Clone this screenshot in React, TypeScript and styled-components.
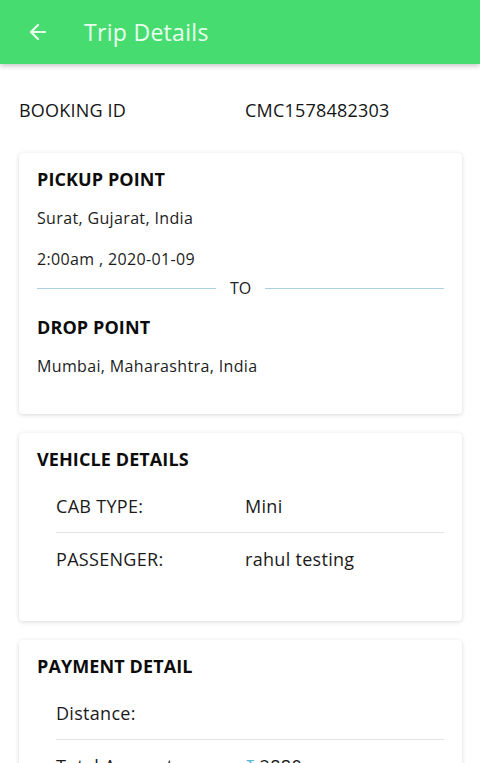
import React from "react";
import styled, { createGlobalStyle } from "styled-components";
import { ArrowLeft } from "lucide-react";

const GlobalStyle = createGlobalStyle`
  body {
    margin: 0;
    background: #ffffff;
    font-family: "Open Sans", "Noto Sans", sans-serif;
    color: #1a1a1a;
  }
`;

const Header = styled.header`
  height: 64px;
  background: #46dc6f;
  display: flex;
  align-items: center;
  padding: 0 26px;
  box-shadow: 0 2px 5px rgba(0, 0, 0, 0.22);
  color: #eafff0;
`;

const Title = styled.h1`
  margin: 0 0 0 34px;
  font-size: 23px;
  font-weight: 400;
  letter-spacing: 0.3px;
`;

const BookingRow = styled.div`
  display: grid;
  grid-template-columns: 226px 1fr;
  padding: 0 19px;
  margin-top: 34px;
  font-size: 18px;
  line-height: 24px;
  color: #151515;
  letter-spacing: 0.2px;
`;

const Card = styled.section<{ $bottom: number }>`
  margin: 0 18px 0 19px;
  background: #fff;
  border-radius: 4px;
  box-shadow: 0 1px 4px rgba(0, 0, 0, 0.16);
  padding: 16px 18px ${(p) => p.$bottom}px;
  & + & {
    margin-top: 19px;
  }
`;

const Cards = styled.div`
  margin-top: 31px;
  padding-bottom: 20px;
`;

const CardTitle = styled.h2`
  margin: 0;
  font-size: 18px;
  line-height: 20px;
  font-weight: 700;
  letter-spacing: 0.1px;
  color: #0c0c0c;
`;

const Line = styled.p<{ $top: number }>`
  margin: ${(p) => p.$top}px 0 0;
  font-size: 16px;
  line-height: 20px;
  letter-spacing: 0.35px;
  color: #1c1c1c;
`;

const Splitter = styled.div`
  display: flex;
  align-items: center;
  gap: 14px;
  margin: 11px 0 21px;
  font-size: 16px;
  line-height: 16px;
  color: #222;
  &::before,
  &::after {
    content: "";
    flex: 1;
    height: 1px;
    background: #a9d2de;
  }
`;

const Rows = styled.div`
  margin: 11px 0 0 19px;
`;

const Row = styled.div`
  display: grid;
  grid-template-columns: 189px 1fr;
  align-items: center;
  height: 52px;
  font-size: 18px;
  letter-spacing: 0.3px;
  color: #1a1a1a;
  & + & {
    border-top: 1px solid #e3e3e3;
  }
`;

const Rupee = styled.span`
  color: #55b9d6;
  margin-right: 4px;
`;

export default function App() {
  return (
    <>
      <GlobalStyle />
      <Header>
        <ArrowLeft size={24} strokeWidth={2.2} />
        <Title>Trip Details</Title>
      </Header>
      <BookingRow>
        <span>BOOKING ID</span>
        <span>CMC1578482303</span>
      </BookingRow>
      <Cards>
        <Card $bottom={38}>
          <CardTitle>PICKUP POINT</CardTitle>
          <Line $top={19}>Surat, Gujarat, India</Line>
          <Line $top={21}>2:00am , 2020-01-09</Line>
          <Splitter>TO</Splitter>
          <CardTitle>DROP POINT</CardTitle>
          <Line $top={19}>Mumbai, Maharashtra, India</Line>
        </Card>
        <Card $bottom={36}>
          <CardTitle>VEHICLE DETAILS</CardTitle>
          <Rows>
            <Row>
              <span>CAB TYPE:</span>
              <span>Mini</span>
            </Row>
            <Row>
              <span>PASSENGER:</span>
              <span>rahul testing</span>
            </Row>
          </Rows>
        </Card>
        <Card $bottom={36}>
          <CardTitle>PAYMENT DETAIL</CardTitle>
          <Rows>
            <Row>
              <span>Distance:</span>
              <span></span>
            </Row>
            <Row>
              <span>Total Amount:</span>
              <span>
                <Rupee>₹</Rupee>2880
              </span>
            </Row>
          </Rows>
        </Card>
      </Cards>
    </>
  );
}
